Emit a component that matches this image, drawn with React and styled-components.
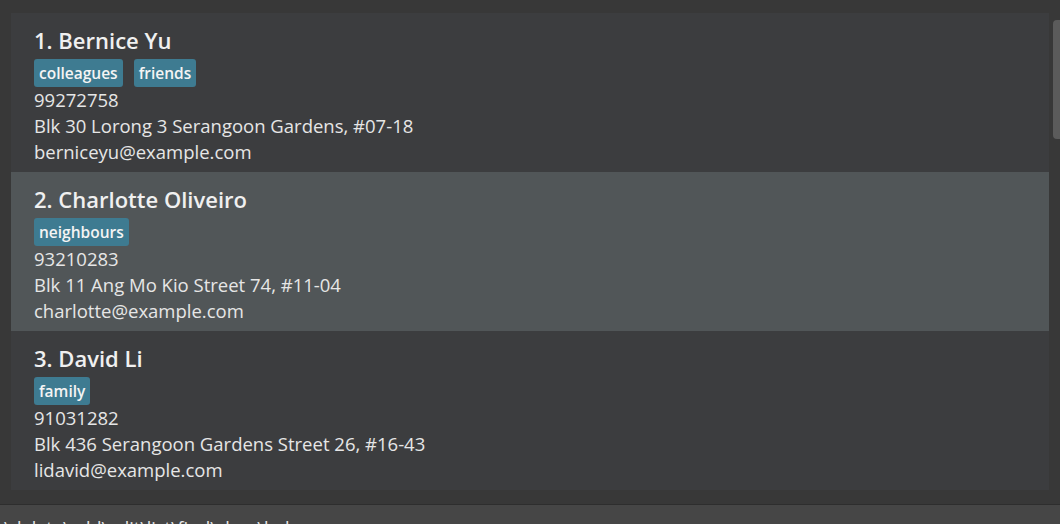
import React from "react";
import styled, { createGlobalStyle } from "styled-components";

const Global = createGlobalStyle`
  html, body { margin: 0; padding: 0; background: #383838; overflow: hidden; }
  body { font-family: "Open Sans", "Noto Sans", sans-serif; }
`;

const Page = styled.div`
  width: 1060px;
  height: 524px;
  display: flex;
  flex-direction: column;
  background: #383838;
  overflow: hidden;
`;

const ListArea = styled.div`
  display: flex;
  padding: 13px 0 0 11px;
  height: 490px;
  box-sizing: border-box;
  flex-shrink: 0;
`;

const List = styled.div`
  width: 1038px;
  flex-shrink: 0;
  height: 477px;
  background: #3c3d3f;
  display: flex;
  flex-direction: column;
  overflow: hidden;
`;

const ScrollTrack = styled.div`
  flex: 1;
  min-width: 0;
  overflow: hidden;
  padding: 7px 0 0 4px;
`;

const ScrollThumb = styled.div`
  width: 12px;
  height: 119px;
  background: #5b5b5b;
  border-radius: 4px;
`;

const Card = styled.div`
  height: 159px;
  flex-shrink: 0;
  box-sizing: border-box;
  padding: 13px 0 0 23px;
  background: ${(p) => (p.$selected ? "#515658" : "#3c3d3f")};
  color: #ececec;
`;

const Name = styled.div`
  font-size: 22px;
  font-weight: 600;
  line-height: 29px;
  color: #f0f0f0;
`;

const Tags = styled.div`
  display: flex;
  align-items: flex-start;
  gap: 11px;
  margin: 4px 0 0 0;
`;

const Tag = styled.span`
  display: inline-block;
  height: 28px;
  box-sizing: border-box;
  background: #3e7b91;
  color: #f4f4f4;
  font-size: 15.5px;
  font-weight: 600;
  line-height: 28px;
  padding: 0 5px;
  border-radius: 3px;
`;

const Line = styled.div`
  font-size: 18.5px;
  line-height: 26px;
  color: #e6e6e6;
`;

const Result = styled.div`
  flex: 1;
  border-top: 1px solid #2e2e2e;
  margin-top: 14px;
  background: #464646;
  color: #e6e6e6;
  font-size: 18px;
  line-height: 24px;
  padding: 11px 0 0 4px;
  white-space: nowrap;
`;

const persons = [
  { name: "Bernice Yu", tags: ["colleagues", "friends"], phone: "99272758", address: "Blk 30 Lorong 3 Serangoon Gardens, #07-18", email: "berniceyu@example.com" },
  { name: "Charlotte Oliveiro", tags: ["neighbours"], phone: "93210283", address: "Blk 11 Ang Mo Kio Street 74, #11-04", email: "charlotte@example.com" },
  { name: "David Li", tags: ["family"], phone: "91031282", address: "Blk 436 Serangoon Gardens Street 26, #16-43", email: "lidavid@example.com" },
];

export default function App() {
  return (
    <Page>
      <Global />
      <ListArea>
        <List>
          {persons.map((p, i) => (
            <Card key={p.name} $selected={i === 1}>
              <Name>{i + 1}. {p.name}</Name>
              <Tags>
                {p.tags.map((t) => (
                  <Tag key={t}>{t}</Tag>
                ))}
              </Tags>
              <Line>{p.phone}</Line>
              <Line>{p.address}</Line>
              <Line>{p.email}</Line>
            </Card>
          ))}
        </List>
        <ScrollTrack>
          <ScrollThumb />
        </ScrollTrack>
      </ListArea>
      <Result>\delete\add\edit\list\find\clear\help</Result>
    </Page>
  );
}
